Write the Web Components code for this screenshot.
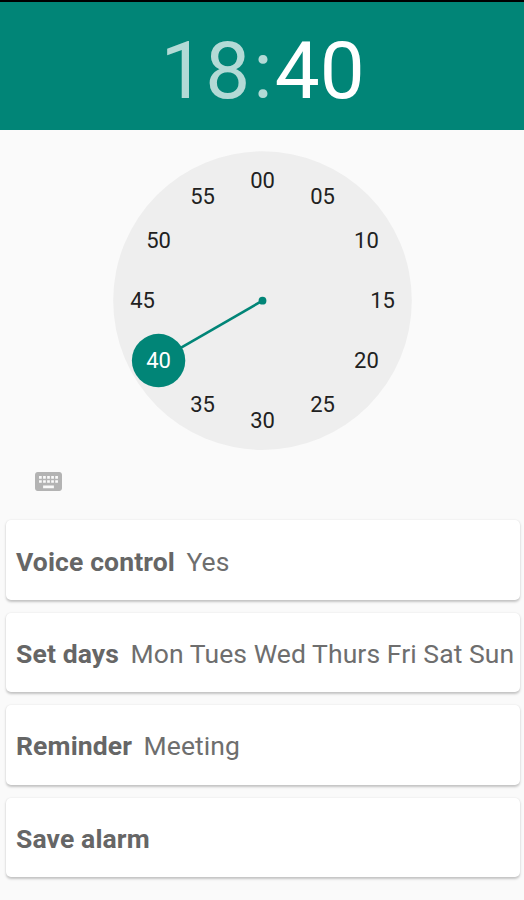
<!DOCTYPE html>
<html lang="en">
<head>
<meta charset="utf-8">
<title>Alarm</title>
<style>
    html, body {
        margin: 0;
        height: 900px;
        overflow: hidden;
        background: #fafafa;
        font-family: Roboto, "Liberation Sans", sans-serif;
    }
</style>
</head>
<body>
<alarm-screen></alarm-screen>

<script>
const headerTemplate = document.createElement('template');
headerTemplate.innerHTML = `
    <style>
        :host {
            display: flex;
            justify-content: center;
            align-items: center;
            height: 130px;
            box-sizing: border-box;
            border-top: 2px solid #000;
            padding: 9px 0 0 1px;
            background: #018577;
            color: #b3dad6;
            font-size: 80px;
            line-height: 94px;
        }

        .colon {
            margin: 0 2px 0 3px;
        }

        .minutes {
            color: #fff;
        }
    </style>
    <span class="hours"><slot name="hours"></slot></span>
    <span class="colon">:</span>
    <span class="minutes"><slot name="minutes"></slot></span>
`;

class TimeHeader extends HTMLElement {
    constructor() {
        super();
        this.attachShadow({ mode: 'open' });
        this.shadowRoot.appendChild(headerTemplate.content.cloneNode(true));
    }
}

class ClockFace extends HTMLElement {
    constructor() {
        super();
        this.attachShadow({ mode: 'open' });
    }

    connectedCallback() {
        this.render();
    }

    // point on the number ring for a minute value
    pointFor(minute) {
        const angle = minute * Math.PI / 30;
        return {
            x: 149.5 + 120 * Math.sin(angle),
            y: 149.7 - 119.7 * Math.cos(angle)
        };
    }

    render() {
        const selected = Number(this.getAttribute('minute'));
        const hand = this.pointFor(selected);
        let labels = '';

        for (let m = 0; m < 60; m += 5) {
            const p = this.pointFor(m);
            const cls = m === selected ? ' class="selected"' : '';
            labels += `<text${cls} x="${p.x.toFixed(1)}" y="${(p.y + 7.4).toFixed(1)}">${String(m).padStart(2, '0')}</text>`;
        }

        this.shadowRoot.innerHTML = `
            <style>
                :host {
                    display: block;
                    width: 299px;
                    height: 299px;
                }

                svg {
                    display: block;
                }

                text {
                    font-size: 22px;
                    fill: #212121;
                    text-anchor: middle;
                }

                .selected {
                    fill: #fff;
                }
            </style>
            <svg width="299" height="299" viewBox="0 0 299 299">
                <circle cx="149.5" cy="149.6" r="149.3" fill="#eee"/>
                <line x1="149.5" y1="149.7" x2="${hand.x}" y2="${hand.y}" stroke="#018577" stroke-width="2.6"/>
                <circle cx="149.5" cy="149.7" r="3.9" fill="#018577"/>
                <circle cx="${hand.x}" cy="${hand.y}" r="26.7" fill="#018577"/>
                ${labels}
            </svg>
        `;
    }
}

const keyboardTemplate = document.createElement('template');
keyboardTemplate.innerHTML = `
    <style>
        :host {
            display: block;
            width: 27px;
            height: 19px;
        }

        svg {
            display: block;
        }
    </style>
    <svg width="27" height="19" viewBox="2 5 20 14" preserveAspectRatio="none">
        <path fill="#b3b3b3" d="M20 5H4c-1.1 0-1.99.9-1.99 2L2 17c0 1.1.9 2 2 2h16c1.1 0 2-.9 2-2V7c0-1.1-.9-2-2-2zm-9 3h2v2h-2V8zm0 3h2v2h-2v-2zM8 8h2v2H8V8zm0 3h2v2H8v-2zm-1 2H5v-2h2v2zm0-3H5V8h2v2zm9 7H8v-2h8v2zm0-4h-2v-2h2v2zm0-3h-2V8h2v2zm3 3h-2v-2h2v2zm0-3h-2V8h2v2z"/>
    </svg>
`;

class KeyboardIcon extends HTMLElement {
    constructor() {
        super();
        this.attachShadow({ mode: 'open' });
        this.shadowRoot.appendChild(keyboardTemplate.content.cloneNode(true));
    }
}

const cardTemplate = document.createElement('template');
cardTemplate.innerHTML = `
    <style>
        :host {
            display: flex;
            align-items: center;
            gap: 11.5px;
            height: 79.5px;
            box-sizing: border-box;
            padding: 3px 0 0 10.5px;
            border-radius: 5px;
            background: #fff;
            box-shadow: 0 1.5px 2.5px rgba(0, 0, 0, 0.22), 0 0 2px rgba(0, 0, 0, 0.03);
            color: #6e6e6e;
            font-size: 26.5px;
            line-height: 32px;
            letter-spacing: 0.07px;
            white-space: nowrap;
        }

        .label {
            font-weight: 700;
            color: #666;
            letter-spacing: 0.13px;
        }
    </style>
    <span class="label"><slot name="label"></slot></span>
    <span class="value"><slot></slot></span>
`;

class OptionCard extends HTMLElement {
    constructor() {
        super();
        this.attachShadow({ mode: 'open' });
        this.shadowRoot.appendChild(cardTemplate.content.cloneNode(true));
    }
}

const screenTemplate = document.createElement('template');
screenTemplate.innerHTML = `
    <style>
        :host {
            display: block;
            width: 524px;
        }

        clock-face {
            margin: 21px 0 0 113px;
        }

        keyboard-icon {
            margin: 22px 0 0 35px;
        }

        .options {
            display: flex;
            flex-direction: column;
            gap: 12.9px;
            margin: 29.4px 4.5px 0 5.5px;
        }
    </style>
    <time-header>
        <span slot="hours">18</span>
        <span slot="minutes">40</span>
    </time-header>
    <clock-face minute="40"></clock-face>
    <keyboard-icon></keyboard-icon>
    <div class="options">
        <option-card><span slot="label">Voice control</span>Yes</option-card>
        <option-card><span slot="label">Set days</span>Mon Tues Wed Thurs Fri Sat Sun</option-card>
        <option-card><span slot="label">Reminder</span>Meeting</option-card>
        <option-card><span slot="label">Save alarm</span></option-card>
    </div>
`;

class AlarmScreen extends HTMLElement {
    constructor() {
        super();
        this.attachShadow({ mode: 'open' });
        this.shadowRoot.appendChild(screenTemplate.content.cloneNode(true));
    }
}

customElements.define('time-header', TimeHeader);
customElements.define('clock-face', ClockFace);
customElements.define('keyboard-icon', KeyboardIcon);
customElements.define('option-card', OptionCard);
customElements.define('alarm-screen', AlarmScreen);
</script>
</body>
</html>
